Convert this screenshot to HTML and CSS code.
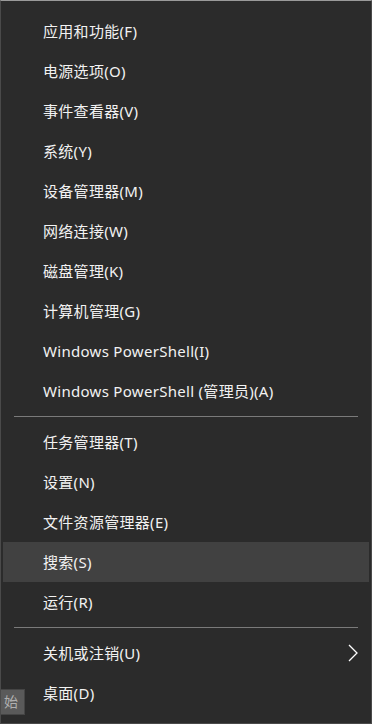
FILE: index.html
```html
<!DOCTYPE html>
<html lang="zh-CN">
<head>
<meta charset="utf-8">
<link rel="stylesheet" href="styles.css">
</head>
<body>
<div class="menu">
  <ul class="group">
    <li class="item">应用和功能(F)</li>
    <li class="item">电源选项(O)</li>
    <li class="item">事件查看器(V)</li>
    <li class="item">系统(Y)</li>
    <li class="item">设备管理器(M)</li>
    <li class="item">网络连接(W)</li>
    <li class="item">磁盘管理(K)</li>
    <li class="item">计算机管理(G)</li>
    <li class="item">Windows PowerShell(I)</li>
    <li class="item">Windows PowerShell (管理员)(A)</li>
  </ul>
  <div class="sep"></div>
  <ul class="group">
    <li class="item">任务管理器(T)</li>
    <li class="item">设置(N)</li>
    <li class="item">文件资源管理器(E)</li>
    <li class="item active">搜索(S)</li>
    <li class="item">运行(R)</li>
  </ul>
  <div class="sep"></div>
  <ul class="group">
    <li class="item has-sub">关机或注销(U)
      <svg class="chev" width="10" height="18" viewBox="0 0 10 18"><path d="M1 1 L9 9 L1 17" fill="none" stroke="#ffffff" stroke-width="1.3"/></svg>
    </li>
    <li class="item">桌面(D)</li>
  </ul>
  <div class="tip">始</div>
</div>
</body>
</html>
```
FILE: styles.css
```css
html, body {
  margin: 0;
  padding: 0;
  background: #2b2b2b;
}
.menu {
  position: relative;
  width: 372px;
  height: 724px;
  box-sizing: border-box;
  background: #2b2b2b;
  border: 1px solid #4a4a4a;
  border-top-color: #9a9a9a;
  padding: 10px 2px 10px 2px;
  font-family: "Segoe UI", "Noto Sans", "Noto Sans CJK SC", sans-serif;
  font-size: 15px;
  letter-spacing: 0.3px;
  color: #f2f2f2;
  overflow: hidden;
}
.group {
  list-style: none;
  margin: 0;
  padding: 0;
}
.item {
  height: 40px;
  line-height: 40px;
  padding-left: 40px;
  display: flex;
  align-items: center;
  justify-content: space-between;
  padding-right: 11px;
  white-space: nowrap;
}
.item.active {
  background: #414141;
}
.chev {
  display: block;
}
.sep {
  height: 1px;
  background: #7a7a7a;
  margin: 5px 11px 5px 11px;
}
.tip {
  position: absolute;
  left: -1px;
  top: 688px;
  width: 23px;
  height: 24px;
  background: #5a5a5a;
  border: 1px solid #454545;
  color: #b0b0b0;
  font-size: 14px;
  letter-spacing: 0;
  line-height: 24px;
  text-indent: 3px;
  overflow: hidden;
  white-space: nowrap;
}
```
